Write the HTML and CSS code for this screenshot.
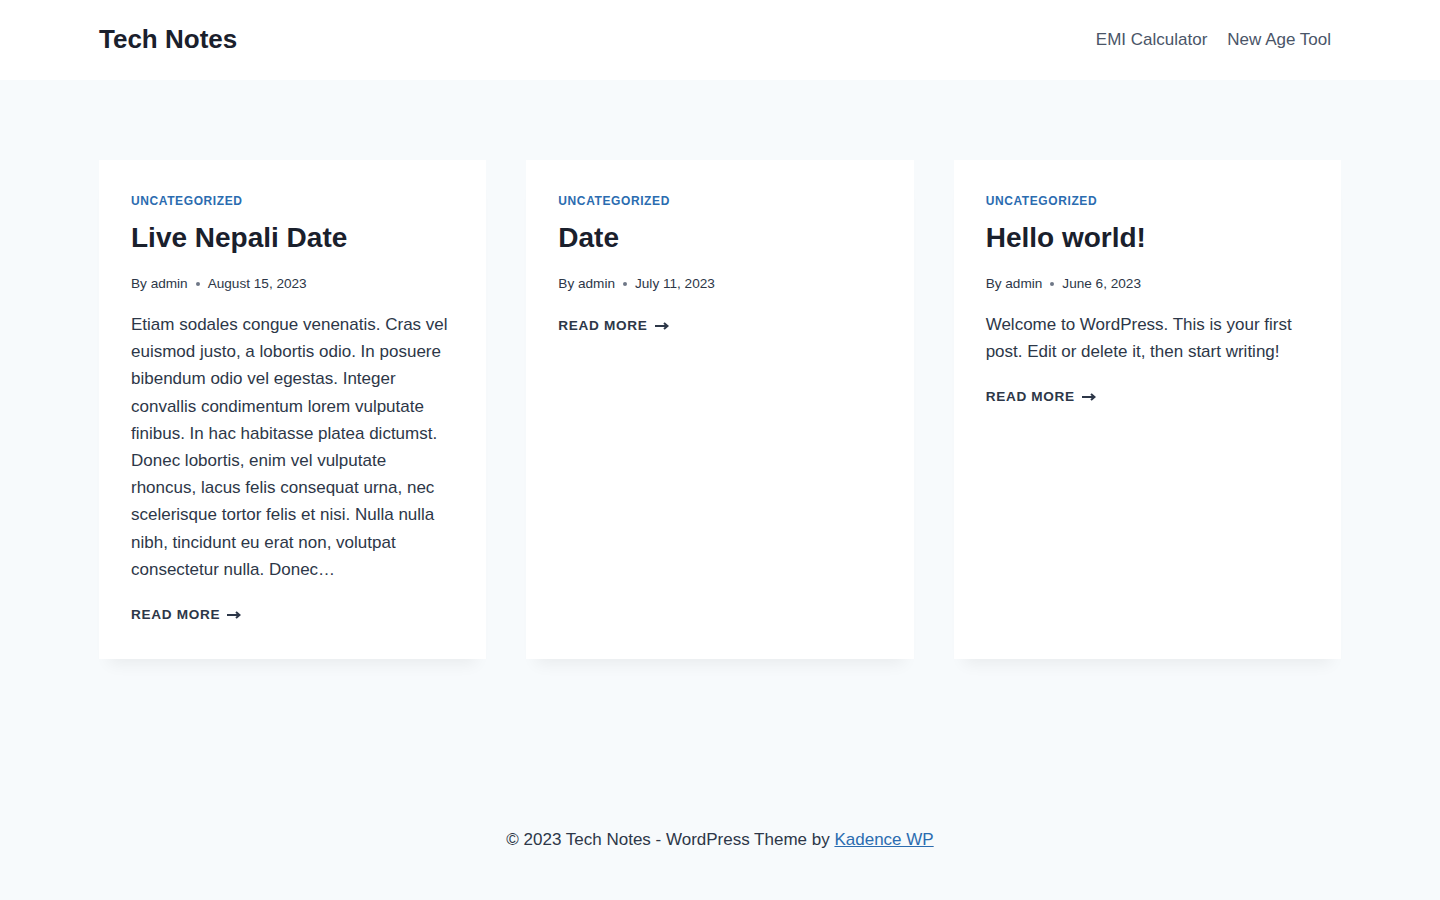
FILE: index.html
```html
<!DOCTYPE html>
<html lang="en">
<head>
<meta charset="utf-8">
<title>Tech Notes</title>
<link rel="stylesheet" href="styles.css">
</head>
<body>
<header class="site-header">
  <div class="header-inner">
    <a class="site-title" href="#">Tech Notes</a>
    <nav class="main-nav">
      <a href="#">EMI Calculator</a>
      <a href="#">New Age Tool</a>
    </nav>
  </div>
</header>
<main class="site-main">
  <div class="posts-grid">
    <article class="card">
      <div class="cat">Uncategorized</div>
      <h2 class="entry-title">Live Nepali Date</h2>
      <div class="meta"><span>By <a href="#">admin</a></span><span class="dot"></span><span>August 15, 2023</span></div>
      <p class="excerpt">Etiam sodales congue venenatis. Cras vel euismod justo, a lobortis odio. In posuere bibendum odio vel egestas. Integer convallis condimentum lorem vulputate finibus. In hac habitasse platea dictumst. Donec lobortis, enim vel vulputate rhoncus, lacus felis consequat urna, nec scelerisque tortor felis et nisi. Nulla nulla nibh, tincidunt eu erat non, volutpat consectetur nulla. Donec…</p>
      <a class="more" href="#">Read More <svg class="arrow" width="14" height="8" viewBox="0 0 14 8"><path d="M0 4h11M9 1l3.5 3L9 7" fill="none" stroke="currentColor" stroke-width="2"/></svg></a>
    </article>
    <article class="card">
      <div class="cat">Uncategorized</div>
      <h2 class="entry-title">Date</h2>
      <div class="meta"><span>By <a href="#">admin</a></span><span class="dot"></span><span>July 11, 2023</span></div>
      <a class="more" href="#">Read More <svg class="arrow" width="14" height="8" viewBox="0 0 14 8"><path d="M0 4h11M9 1l3.5 3L9 7" fill="none" stroke="currentColor" stroke-width="2"/></svg></a>
    </article>
    <article class="card">
      <div class="cat">Uncategorized</div>
      <h2 class="entry-title">Hello world!</h2>
      <div class="meta"><span>By <a href="#">admin</a></span><span class="dot"></span><span>June 6, 2023</span></div>
      <p class="excerpt">Welcome to WordPress. This is your first post. Edit or delete it, then start writing!</p>
      <a class="more" href="#">Read More <svg class="arrow" width="14" height="8" viewBox="0 0 14 8"><path d="M0 4h11M9 1l3.5 3L9 7" fill="none" stroke="currentColor" stroke-width="2"/></svg></a>
    </article>
  </div>
</main>
<footer class="site-footer">
  <p>© 2023 Tech Notes - WordPress Theme by <a href="#">Kadence WP</a></p>
</footer>
</body>
</html>
```
FILE: styles.css
```css
* { box-sizing: border-box; }
html, body { margin: 0; padding: 0; }
body {
  font-family: "Liberation Sans", Arial, sans-serif;
  font-size: 17px;
  line-height: 1.6;
  color: #2d3748;
  background: #f7fafc;
}
a { color: inherit; text-decoration: none; }

.site-header { background: #fff; }
.header-inner {
  max-width: 1290px;
  margin: 0 auto;
  padding: 0 24px;
  height: 80px;
  display: flex;
  align-items: center;
  justify-content: space-between;
}
.site-title {
  font-size: 26px;
  font-weight: 700;
  color: #1a202c;
  line-height: 1.2;
}
.main-nav { display: flex; }
.main-nav a {
  color: #4a5568;
  font-size: 17px;
  padding: 10px 10px;
}

.site-main {
  max-width: 1290px;
  margin: 0 auto;
  padding: 80px 24px;
}
.posts-grid {
  display: grid;
  grid-template-columns: repeat(3, 1fr);
  gap: 40px;
}
.card {
  background: #fff;
  padding: 32px 32px 33px;
  box-shadow: 0 15px 15px -10px rgba(0,0,0,0.06);
  display: flex;
  flex-direction: column;
  align-items: flex-start;
}
.cat {
  color: #2b6cb0;
  font-size: 12px;
  font-weight: 700;
  letter-spacing: 0.05em;
  text-transform: uppercase;
  line-height: 18px;
  margin-bottom: 7px;
}
.entry-title {
  margin: 0;
  font-size: 28px;
  line-height: 42px;
  font-weight: 700;
  color: #1a202c;
}
.meta {
  font-size: 13.6px;
  line-height: 22px;
  margin-top: 14px;
  display: flex;
  align-items: center;
  color: #2d3748;
}
.dot {
  width: 4px;
  height: 4px;
  border-radius: 50%;
  background: #4a5568;
  margin: 0 8px;
  opacity: 0.8;
}
.excerpt {
  margin: 16px 0 1px;
  font-size: 17px;
  line-height: 27.2px;
}
.more {
  margin-top: 20px;
  font-size: 13.6px;
  line-height: 22px;
  font-weight: 700;
  letter-spacing: 0.05em;
  text-transform: uppercase;
  color: #2d3748;
  display: inline-flex;
  align-items: center;
}
.arrow { margin-left: 7px; }

.site-footer {
  text-align: center;
  padding: 4px 0 48px;
}
.site-footer p {
  margin: 83px 0 0;
  font-size: 17px;
  line-height: 27px;
}
.site-footer a { color: #2b6cb0; text-decoration: underline; }
```
